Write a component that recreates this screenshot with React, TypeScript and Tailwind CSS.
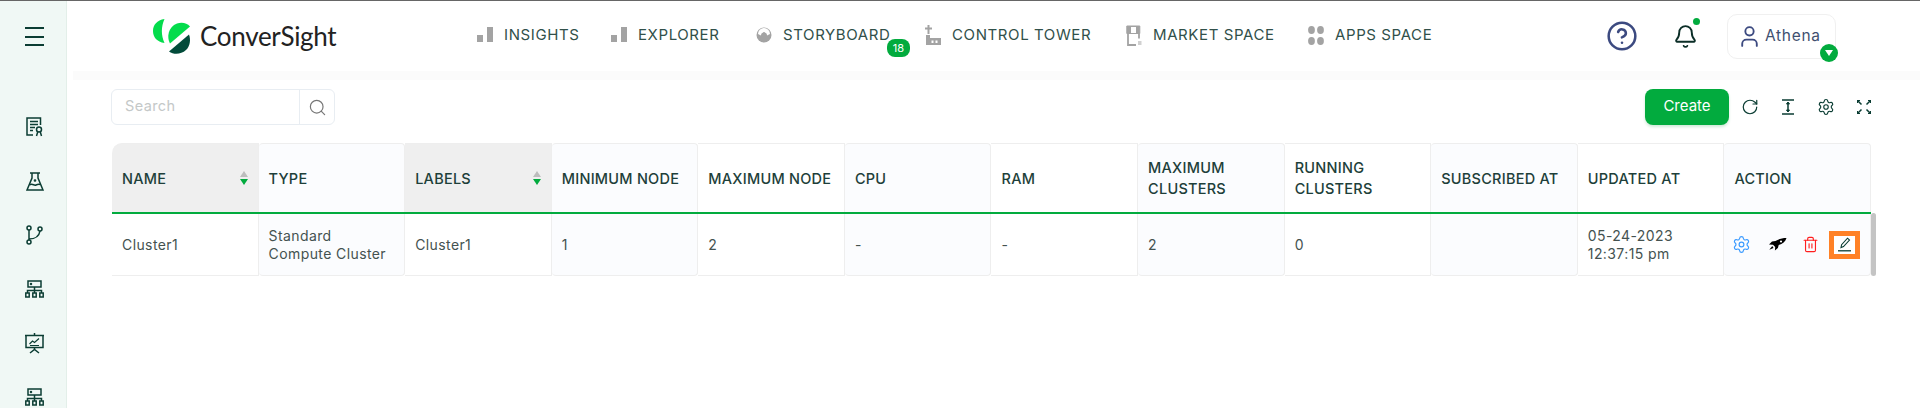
import { Bell, CircleHelp, RotateCw, Search, Settings, Trash2, User } from "lucide-react";

const font = "font-['Inter','Liberation_Sans',sans-serif]";

const Bars = () => (
  <svg width="16" height="16" viewBox="0 0 16 16" fill="#a3a3a3">
    <rect x="0" y="8" width="6" height="7" />
    <rect x="10" y="0" width="6" height="15" />
  </svg>
);

const Dial = () => (
  <svg width="16" height="16" viewBox="0 0 16 16">
    <circle cx="8" cy="8" r="7.5" fill="#a3a3a3" />
    <path d="M2 7a6 6 0 0 1 12 0l-3 1.500a3 3 0 0 0-6 0z" fill="#fff" />
    <rect x="7.300" y="5" width="1.400" height="3" fill="#a3a3a3" />
  </svg>
);

const Tower = () => (
  <svg width="16" height="20" viewBox="0 0 16 20" fill="#a3a3a3">
    <path d="M2.500 0h2v2.500H7v2H4.500V9h-2V4.500H0v-2h2.500z" />
    <path d="M1 10h4v3h11v7H1z" />
    <rect x="6.500" y="15.500" width="2" height="2.500" fill="#fff" />
    <rect x="10.500" y="15.500" width="2" height="2.500" fill="#fff" />
  </svg>
);

const Store = () => (
  <svg width="16" height="21" viewBox="0 0 16 21" fill="none" stroke="#a3a3a3">
    <path d="M.8 1h13v7.500H.8z" fill="#a3a3a3" />
    <rect x="5" y="2" width="5" height="6" fill="#fff" stroke="none" />
    <path d="M2 8.500v11.500h8M13 8.500v5" strokeWidth="1.800" />
    <path d="M12 17h3.500M12 19h3.500" strokeWidth="1" />
  </svg>
);

const Dots = () => (
  <svg width="16" height="19" viewBox="0 0 16 19" fill="#a3a3a3">
    <ellipse cx="3.500" cy="4" rx="3.400" ry="4" />
    <ellipse cx="12.500" cy="4" rx="3.400" ry="4" />
    <ellipse cx="3.500" cy="15" rx="3.400" ry="4" />
    <ellipse cx="12.500" cy="15" rx="3.400" ry="4" />
  </svg>
);

const navItems = [
  { title: "INSIGHTS", icon: Bars, width: "w-[134px]" },
  { title: "EXPLORER", icon: Bars, width: "w-[145px]" },
  { title: "STORYBOARD", icon: Dial, width: "w-[169px]", badge: 18 },
  { title: "CONTROL TOWER", icon: Tower, width: "w-[201px]" },
  { title: "MARKET SPACE", icon: Store, width: "w-[182px]" },
  { title: "APPS SPACE", icon: Dots, width: "w-[130px]" },
];

const side = { fill: "none", stroke: "#0b3d33", strokeWidth: 1.5 };

const DocBadge = () => (
  <svg width="18" height="20" viewBox="0 0 18 20" {...side}>
    <path d="M14.500 8V1H1v17h6" />
    <path d="M4 4.500h8M4 7.500h8M4 10.500h5M4 13.500h3" />
    <circle cx="13" cy="12.500" r="2.500" />
    <path d="M10.500 19l1.200-4M15.500 19l-1.200-4" />
  </svg>
);

const Flask = () => (
  <svg width="18" height="19" viewBox="0 0 18 19" {...side}>
    <path d="M4 1h10M6 1v5L1 18h16L12 6V1" />
    <path d="M3.500 13c3-2 4.500 1 6.500 0s3-1 4.500-.5" />
    <circle cx="9" cy="8.500" r=".6" />
  </svg>
);

const Branch = () => (
  <svg width="17" height="20" viewBox="0 0 17 20" {...side}>
    <circle cx="3" cy="3" r="2" />
    <circle cx="14" cy="4" r="2" />
    <circle cx="3" cy="17" r="2" />
    <path d="M3 5v10M3 14c5 0 10-2 11-8" />
  </svg>
);

const Hierarchy = () => (
  <svg width="19" height="18" viewBox="0 0 19 18" {...side}>
    <rect x="3" y="1" width="13" height="6" />
    <path d="M9.500 7v6M2.500 13v-2.500h14V13" />
    <rect x=".8" y="13" width="3.400" height="4" />
    <rect x="7.800" y="13" width="3.400" height="4" />
    <rect x="14.800" y="13" width="3.400" height="4" />
    <circle cx="6" cy="4" r=".5" />
  </svg>
);

const Presentation = () => (
  <svg width="21" height="21" viewBox="0 0 21 21" {...side}>
    <path d="M10.500 0v2.500M1 2.500h19M2 2.500v12h17v-12M10.500 14.500v2M6 20l4.500-3.500L15 20" />
    <path d="M5.500 11l3-3 2 1.500 4.500-4M6 12.500h9" strokeWidth="1.200" />
  </svg>
);

const sideItems = [DocBadge, Flask, Branch, Hierarchy, Presentation, Hierarchy];

const columns = [
  { head: ["NAME"], body: ["Cluster1"], sorted: true },
  { head: ["TYPE"], body: ["Standard", "Compute Cluster"] },
  { head: ["LABELS"], body: ["Cluster1"], sorted: true },
  { head: ["MINIMUM NODE"], body: ["1"] },
  { head: ["MAXIMUM NODE"], body: ["2"] },
  { head: ["CPU"], body: ["-"] },
  { head: ["RAM"], body: ["-"] },
  { head: ["MAXIMUM", "CLUSTERS"], body: ["2"] },
  { head: ["RUNNING", "CLUSTERS"], body: ["0"] },
  { head: ["SUBSCRIBED AT"], body: [] },
  { head: ["UPDATED AT"], body: ["05-24-2023", "12:37:15 pm"] },
  { head: ["ACTION"], body: [] },
];

const Rocket = () => (
  <svg width="19" height="13" viewBox="0 0 18 13" fill="#000">
    <path d="M18 0C13.500 0 9.500 1.200 7 3L3.500 3.500.5 6.500l4 .3 2.200 2.200-.3 3.500 3-2.500.8-3C14 6 17 3.500 18 0z" />
    <path d="M3.800 8L.8 11.800l4.200-1.800z" />
    <circle cx="12.500" cy="3.500" r="1.100" fill="#fff" />
  </svg>
);

const HeightIcon = () => (
  <svg width="14" height="16" viewBox="0 0 14 16" fill="none" stroke="#0b3d33" strokeWidth="1.500">
    <path d="M1 1h12M1 15h12M7 3.500v9" />
    <path d="M5.500 5L7 3l1.500 2zM5.500 11L7 13l1.500-2z" fill="#0b3d33" strokeWidth="1" />
  </svg>
);

const ExpandIcon = () => (
  <svg width="14" height="14" viewBox="0 0 14 14" fill="none" stroke="#0b3d33" strokeWidth="1.500">
    <path d="M1 1l3.500 3.500M13 1L9.500 4.500M1 13l3.500-3.500M13 13L9.500 9.500" />
    <path d="M.5 3V.5H3M11 .5h2.500V3M.5 11v2.500H3M11 13.500h2.500V11" strokeWidth="1.200" />
  </svg>
);

const PencilIcon = () => (
  <svg width="14" height="15" viewBox="0 0 14 15" fill="none" stroke="#0b3d33" strokeWidth="1.100">
    <path d="M3 10.500l.6-2.800L9.500 1.200l2 1.800-6 6.500z" />
    <path d="M0 13.800h13" strokeWidth="1.300" />
  </svg>
);

function Logo() {
  return (
    <div className="flex items-center ml-[86px] w-[324px] h-full">
      <svg width="38" height="36" viewBox="0 0 38 36" className="mt-[1px]">
        <path d="M11.500 0C4 1 0 6 0 12s4 11 11.500 12C8 16 8 8 11.500 0z" fill="#04dc4c" />
        <path d="M17 24.500C13.500 18 15 8 24 4.500c5-1.500 10-.5 13 3z" fill="#04dc4c" />
        <path d="M16 32.500L36 15.500c2 5.500 1 11.500-3 15.500-5 4.500-12 5-17 1.500z" fill="#024b3a" />
      </svg>
      <span className="ml-[9px] text-[26px] leading-none tracking-[-0.3px] text-[#222] font-['Lato',sans-serif]">ConverSight</span>
    </div>
  );
}

function Header() {
  return (
    <header className="h-[70px] flex items-center">
      <Logo />
      <nav className="flex items-center h-full">
        {navItems.map((item) => (
          <div key={item.title} className={`relative flex items-center -mt-[2px] ${item.width}`}>
            <span className="w-[16px] flex justify-center">
              <item.icon />
            </span>
            <span className="ml-[11px] text-[15px] tracking-[0.6px] text-[#31504a] whitespace-nowrap">{item.title}</span>
            {item.badge && (
              <span className="absolute left-[131px] top-[15px] w-[23px] h-[18px] rounded-[8px] bg-[#02ab3e] text-white text-[11px] flex items-center justify-center">
                {item.badge}
              </span>
            )}
          </div>
        ))}
      </nav>
      <div className="ml-[171px] w-[25px] flex justify-center">
        <CircleHelp size={32} strokeWidth={1.9} color="#3c4a80" className="shrink-0" />
      </div>
      <div className="relative ml-[38px] w-[26px] flex justify-center mt-[1px]">
        <Bell size={25} strokeWidth={1.8} color="#0b2e27" />
        <span className="absolute right-[-2px] -top-[6px] w-[7px] h-[7px] rounded-full bg-[#02ab3e]" />
      </div>
      <div className="relative ml-[29px] w-[109px] h-[45px] rounded-[10px] border border-[#f0f0f0] flex items-center pl-[9px]">
        <User size={25} strokeWidth={1.8} color="#3c4a80" />
        <span className="ml-[3px] text-[15.500px] tracking-[0.7px] text-[#3f5070]">Athena</span>
        <span className="absolute right-[-3px] bottom-[-4px] w-[18px] h-[18px] rounded-full bg-[#02ab3e] flex items-center justify-center">
          <span className="w-0 h-0 border-l-[4px] border-r-[4px] border-t-[6px] border-l-transparent border-r-transparent border-t-white" />
        </span>
      </div>
    </header>
  );
}

function Toolbar() {
  return (
    <div className="h-[36px] flex justify-between pl-[44px] pr-[37px]">
      <div className="w-[224px] flex rounded-[6px] border border-[#e8edf2]">
        <span className="flex-1 pl-[13px] pb-[2px] flex items-center text-[14.500px] text-[#c4c8c8] tracking-[0.4px]">Search</span>
        <span className="w-[35px] border-l border-[#e8edf2] flex items-center justify-center">
          <Search size={19} strokeWidth={1.5} color="#777" />
        </span>
      </div>
      <div className="flex items-center">
        <button className="w-[84px] h-[36px] rounded-[8px] bg-[#02ab3e] text-white text-[15px] pb-[2px] shadow-[0_2px_3px_#cfe9d8]">Create</button>
        <div className="ml-[2px] flex">
          {[
            <RotateCw key="r" size={18} strokeWidth={1.6} color="#0b3d33" />,
            <HeightIcon key="h" />,
            <Settings key="s" size={18} strokeWidth={1.5} color="#0b3d33" />,
            <ExpandIcon key="e" />,
          ].map((icon, i) => (
            <span key={i} className="w-[38px] flex items-center justify-center">
              {icon}
            </span>
          ))}
        </div>
      </div>
    </div>
  );
}

function Actions() {
  return (
    <div className="flex items-center pl-[8px] h-full">
      <Settings size={19} strokeWidth={1.5} color="#3b9bff" />
      <span className="ml-[17px]"><Rocket /></span>
      <span className="ml-[15px]"><Trash2 size={17} strokeWidth={1.6} color="#ff1f1f" /></span>
      <span className="ml-[10px] w-[31px] h-[28px] border-[5px] border-[#ff8126] bg-white flex items-center justify-center">
        <PencilIcon />
      </span>
    </div>
  );
}

function ClusterTable() {
  return (
    <div className="flex pl-[45px] mt-[18px]">
      <div className="w-[1759px] grid grid-cols-12">
        {columns.map((col, i) => {
          const striped = i % 2 === 1;
          return (
            <div key={col.head[0]} className="flex flex-col">
              <div
                className={`h-[69px] px-[10px] flex items-center justify-between border-t border-r border-[#eeeeee] text-[14.500px] leading-[21px] font-medium tracking-[0.25px] text-[#1e3f3a] ${
                  col.sorted ? "bg-[#efefef]" : striped ? "bg-[#fbfcfe] rounded-t-[4px]" : "bg-white"
                } ${i === 0 ? "rounded-tl-[10px]" : ""}`}
              >
                <div>
                  {col.head.map((line) => (
                    <div key={line} className="whitespace-nowrap">{line}</div>
                  ))}
                </div>
                {col.sorted && (
                  <span className="flex flex-col gap-[2px]">
                    <span className="w-0 h-0 border-l-[4px] border-r-[4px] border-b-[6px] border-l-transparent border-r-transparent border-b-[#bdbdbd]" />
                    <span className="w-0 h-0 border-l-[4px] border-r-[4px] border-t-[6px] border-l-transparent border-r-transparent border-t-[#02ab3e]" />
                  </span>
                )}
              </div>
              <div className="h-[2px] bg-[#02ab3e]" />
              <div
                className={`h-[62px] flex items-center border-b border-r border-[#eeeeee] text-[14px] leading-[17.500px] tracking-[0.4px] text-[#445250] ${
                  striped ? "bg-[#fbfcfe] rounded-b-[4px]" : "bg-white"
                } ${i === 11 ? "" : "px-[10px]"}`}
              >
                {i === 11 ? (
                  <Actions />
                ) : (
                  <div>
                    {col.body.map((line) => (
                      <div key={line} className="whitespace-nowrap">{line}</div>
                    ))}
                  </div>
                )}
              </div>
            </div>
          );
        })}
      </div>
      <div className="mt-[70px] w-[5px] h-[63px] rounded-[3px] bg-[#c4c4c4]" />
    </div>
  );
}

export default function App() {
  return (
    <div className={`w-[1920px] h-[408px] overflow-hidden bg-white border-t border-[#666] flex ${font}`}>
      <aside className="w-[67px] shrink-0 bg-[#f0f8f5] border-r border-[#e3efe9] flex flex-col items-center pl-[3px]">
        <div className="mt-[26px] w-[19px] flex flex-col gap-[6.500px]">
          <span className="h-[2px] bg-[#0b3d33]" />
          <span className="h-[2px] bg-[#0b3d33]" />
          <span className="h-[2px] bg-[#0b3d33]" />
        </div>
        <div className="mt-[54px] flex flex-col">
          {sideItems.map((Icon, i) => (
            <div key={i} className="h-[54px] flex items-center justify-center">
              <Icon />
            </div>
          ))}
        </div>
      </aside>
      <main className="flex-1 min-w-0">
        <Header />
        <div className="h-[9px] ml-[6px] bg-[#fbfbfb]" />
        <div className="pt-[9px]">
          <Toolbar />
          <ClusterTable />
        </div>
      </main>
    </div>
  );
}
